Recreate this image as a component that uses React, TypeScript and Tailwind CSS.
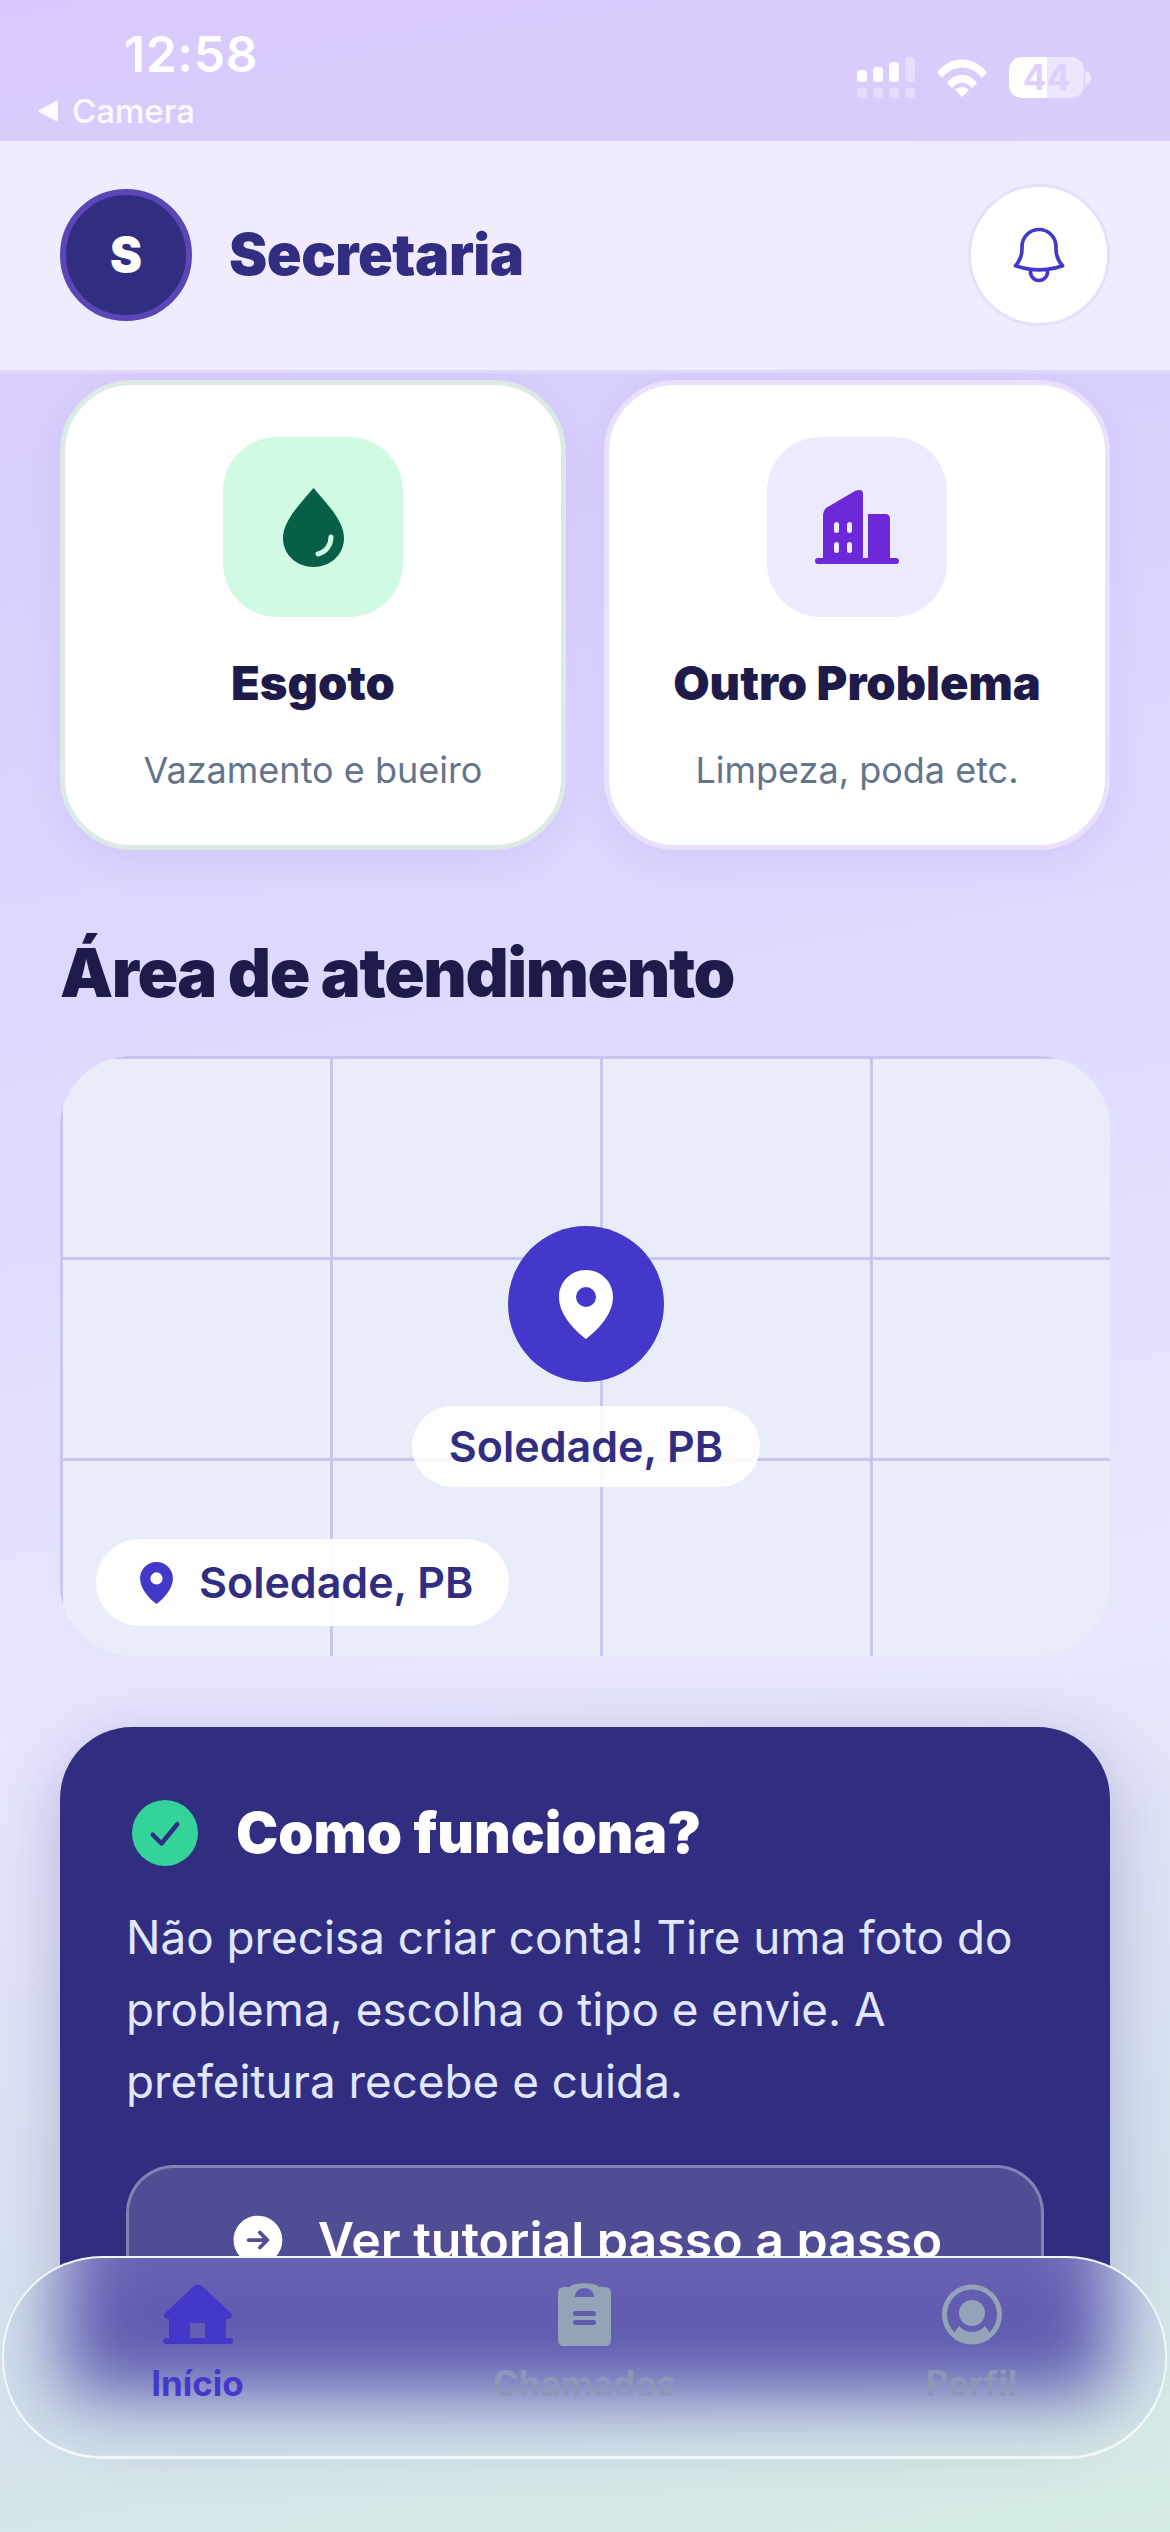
import React from "react";
import { HiOutlineBell, HiArrowRightCircle } from "react-icons/hi2";

function StatusIcons() {
  return (
    <div className="flex items-start gap-[22px] pt-[57px]">
      <svg width="58" height="41" viewBox="0 0 58 41" fill="white">
        <rect x="0" y="13" width="10" height="12" rx="3.5" />
        <rect x="16" y="10" width="10" height="15" rx="3.5" />
        <rect x="32" y="5" width="10" height="20" rx="3.5" />
        <rect x="48" y="0" width="10" height="25" rx="3.5" opacity="0.35" />
        <rect x="0" y="31" width="10" height="10" rx="3.5" opacity="0.35" />
        <rect x="16" y="31" width="10" height="10" rx="3.5" opacity="0.35" />
        <rect x="32" y="31" width="10" height="10" rx="3.5" opacity="0.35" />
        <rect x="48" y="31" width="10" height="10" rx="3.5" opacity="0.35" />
      </svg>
      <svg width="50" height="38" viewBox="0 0 50 38" fill="white" className="mt-[2px]">
        <path d="M0 13.5 C13 -4 37 -4 50 13.5 L45 19 C34 5 16 5 5 19 Z" />
        <path d="M10 24 C18 13 32 13 40 24 L35 29 C29 22 21 22 15 29 Z" />
        <path d="M18 31 C22 27 28 27 32 31 L25 38 Z" />
      </svg>
      <div className="relative flex h-[41px] w-[82px] items-center">
        <div className="flex h-[41px] w-[75px] overflow-hidden rounded-[13px]">
          <div className="w-1/2 bg-white" />
          <div className="w-1/2 bg-white/50" />
        </div>
        <div className="ml-[1px] h-[14px] w-[6px] rounded-r-full bg-white/50" />
        <div className="absolute left-0 top-0 flex h-[41px] w-[75px] items-center justify-center font-['Inter'] text-[35px] font-bold text-[#DDD0FC]">
          44
        </div>
      </div>
    </div>
  );
}

function Drop() {
  return (
    <svg width="61" height="79" viewBox="0 0 61 79">
      <path d="M30.5 0 C42 14 61 32 61 50 C61 67 47 79 30.5 79 C14 79 0 67 0 50 C0 32 19 14 30.5 0 Z" fill="#065F46" />
      <path d="M48 49 C48 57 43 64 35 66" stroke="#D1FAE5" strokeWidth="5" strokeLinecap="round" fill="none" />
    </svg>
  );
}

function Building() {
  return (
    <svg width="84" height="74" viewBox="0 0 84 74" fill="#6D28D9">
      <path d="M8 26 Q8 21 11 18 L40 1 Q48 -2 48 4 L48 68 L8 68 Z" />
      <path d="M53 24 L70 24 Q75 24 75 29 L75 68 L53 68 Z" />
      <rect x="0" y="68" width="84" height="6" rx="3" />
      <rect x="19" y="32" width="5" height="11" rx="2.5" fill="#EDE9FE" />
      <rect x="32" y="32" width="5" height="11" rx="2.5" fill="#EDE9FE" />
      <rect x="19" y="52" width="5" height="11" rx="2.5" fill="#EDE9FE" />
      <rect x="32" y="52" width="5" height="11" rx="2.5" fill="#EDE9FE" />
    </svg>
  );
}

function Pin({ width, height, fill }: { width: number; height: number; fill: string }) {
  return (
    <svg width={width} height={height} viewBox="0 0 54 69" fill={fill}>
      <path
        fillRule="evenodd"
        d="M27 0 C12 0 0 12 0 27 C0 44 15 60 27 69 C39 60 54 44 54 27 C54 12 42 0 27 0 Z M27 17 A10 10 0 1 1 27 37 A10 10 0 1 1 27 17 Z"
      />
    </svg>
  );
}

function Card({ title, sub, border, tint, icon }: { title: string; sub: string; border: string; tint: string; icon: React.ReactNode }) {
  return (
    <div className={`flex h-[470px] flex-1 flex-col items-center rounded-[72px] border-[5px] bg-white pt-[52px] shadow-[0_12px_36px_rgba(67,56,202,0.08)] ${border}`}>
      <div className={`flex h-[180px] w-[180px] items-center justify-center rounded-[54px] ${tint}`}>{icon}</div>
      <div className="mt-[39px] font-['Inter'] text-[47px] font-black leading-[54px] text-[#1E1B4B]">{title}</div>
      <div className="mt-[33px] font-['Inter'] text-[36px] leading-[54px] text-[#64748B]">{sub}</div>
    </div>
  );
}

function NavItem({ label, color, icon }: { label: string; color: string; icon: React.ReactNode }) {
  return (
    <div className="relative flex flex-col items-center">
      <div className="flex h-[72px] items-center justify-center">{icon}</div>
      <div className={`mt-[13px] font-['Inter'] text-[35px] font-bold leading-[40px] ${color}`}>{label}</div>
    </div>
  );
}

export default function App() {
  return (
    <div className="relative h-[2532px] w-[1170px] overflow-hidden bg-[linear-gradient(170deg,#DAC9FD_0%,#D9D0FD_20%,#E1DCFF_45%,#E8E6FE_65%,#D5E3EC_88%,#D6EDE5_100%)] font-['Inter',sans-serif]">
      <div className="flex h-[141px] justify-between pl-[38px] pr-[79px]">
        <div className="flex flex-col">
          <div className="ml-[86px] mt-[27px] text-[50px] font-semibold leading-[54px] tracking-[0.5px] text-white">12:58</div>
          <div className="mt-[10px] flex items-center gap-[14px]">
            <svg width="20" height="22" viewBox="0 0 20 22" fill="white" fillOpacity="0.92">
              <path d="M20 1 L20 21 Q20 22 18 21 L1 12 Q0 11 1 10 L18 1 Q20 0 20 1 Z" />
            </svg>
            <span className="text-[33px] font-medium leading-[40px] text-white/90">Camera</span>
          </div>
        </div>
        <StatusIcons />
      </div>

      <div className="flex h-[232px] items-center justify-between border-b-[3px] border-[#E2DAFD] bg-[#F0EBFE] pb-[2px] pl-[60px] pr-[60px]">
        <div className="flex items-center gap-[37px]">
          <div className="flex h-[132px] w-[132px] items-center justify-center rounded-full border-[6px] border-[#5B46B8] bg-[#312E81] text-[48px] font-black text-white">
            S
          </div>
          <div className="text-[57.5px] font-black tracking-[-0.5px] text-[#312E81]">Secretaria</div>
        </div>
        <div className="flex h-[142px] w-[142px] items-center justify-center rounded-full border-[3px] border-[#E6DFFD] bg-white">
          <HiOutlineBell className="text-[#4338CA]" size={68} strokeWidth={1.3} />
        </div>
      </div>

      <div className="flex flex-col px-[60px] pt-[7px]">
        <div className="flex gap-[38px]">
          <Card title="Esgoto" sub="Vazamento e bueiro" border="border-[#DDE9E5]" tint="bg-[#D1FAE5]" icon={<Drop />} />
          <Card title="Outro Problema" sub="Limpeza, poda etc." border="border-[#EBE0FB]" tint="bg-[#EDE9FE]" icon={<Building />} />
        </div>

        <div className="mt-[83px] text-[67px] font-black leading-[80px] tracking-[-1.4px] text-[#1E1B4B]">Área de atendimento</div>

        <div className="relative mt-[43px] h-[600px] overflow-hidden rounded-[72px] bg-[#E9EDF9] bg-[linear-gradient(#C7C6F0_3px,transparent_3px),linear-gradient(90deg,#C7C6F0_3px,transparent_3px)] bg-[size:270px_201px]">
          <div className="absolute left-[352px] top-[170px] flex w-[348px] flex-col items-center">
            <div className="flex h-[156px] w-[156px] items-center justify-center rounded-full bg-[#4338CA]">
              <Pin width={54} height={69} fill="#FFFFFF" />
            </div>
            <div className="mt-[24px] flex h-[81px] w-[348px] items-center justify-center rounded-full bg-white/90 text-[43px] font-semibold text-[#312E81]">
              Soledade, PB
            </div>
          </div>
          <div className="absolute bottom-[30px] left-[36px] flex h-[87px] w-[413px] items-center gap-[26px] rounded-full bg-white/95 pl-[44px] text-[43px] font-semibold text-[#312E81]">
            <Pin width={33} height={42} fill="#4338CA" />
            Soledade, PB
          </div>
        </div>

        <div className="mt-[71px] h-[680px] rounded-[72px] bg-[#312E81] px-[66px] pt-[71px] shadow-[0_20px_70px_rgba(49,46,129,0.28)]">
          <div className="flex items-center gap-[38px] pl-[6px]">
            <div className="flex h-[66px] w-[66px] items-center justify-center rounded-full bg-[#34D399]">
              <svg width="42" height="42" viewBox="0 0 24 24" fill="none" stroke="#312E81" strokeWidth="2.6" strokeLinecap="round" strokeLinejoin="round">
                <path d="M5 13 L10 18 L19 7" />
              </svg>
            </div>
            <div className="text-[56.5px] font-black leading-[70px] text-white">Como funciona?</div>
          </div>
          <div className="mt-[34px] text-[45.8px] leading-[72px] text-[#E0E7FF]">
            Não precisa criar conta! Tire uma foto do problema, escolha o tipo e envie. A prefeitura recebe e cuida.
          </div>
          <div className="mt-[47px] flex h-[150px] items-center justify-center gap-[30px] rounded-[48px] border-[3px] border-white/30 bg-white/15 text-[50px] font-semibold text-white">
            <HiArrowRightCircle className="text-white" size={60} />
            Ver tutorial passo a passo
          </div>
        </div>
      </div>

      <div className="absolute bottom-[73px] left-[2px] grid h-[203px] w-[1165px] grid-cols-3 overflow-hidden rounded-[100px] border-[2px] border-b-[3px] border-white/70 bg-[linear-gradient(170deg,#D2E2EC_0%,#D1E1EA_60%,#D4E9E6_100%)] pt-[20px]">
        <div className="absolute left-[58px] top-[-100px] h-[238px] w-[1050px] bg-[linear-gradient(180deg,#6F68B8_0%,#6D66B6_42%,#5C58AE_65%,#5C58AE_80%,#6360B2_100%)] blur-[36px]" />
        <NavItem
          label="Início"
          color="text-[#4338CA]"
          icon={
            <svg width="70" height="60" viewBox="0 0 70 60" fill="#4338CA">
              <path
                fillRule="evenodd"
                d="M31 2 Q35 -1 39 2 L68 29 Q71 33 66 35 L63 35 L63 54 L6 54 L6 35 L4 35 Q-1 33 2 29 Z M27 39 L27 54 L42 54 L42 39 Z"
              />
              <rect x="0" y="54" width="70" height="6" rx="3" />
            </svg>
          }
        />
        <NavItem
          label="Chamados"
          color="text-[#8E97BA]"
          icon={
            <svg width="53" height="63" viewBox="0 0 53 63" fill="#94A3B8">
              <path
                fillRule="evenodd"
                d="M6 4 L12 4 C15 -1 38 -1 41 4 L47 4 Q53 4 53 10 L53 57 Q53 63 47 63 L6 63 Q0 63 0 57 L0 10 Q0 4 6 4 Z M17 14 L36 14 C36 2 17 2 17 14 Z"
              />
              <rect x="15" y="28" width="23" height="5" rx="2.5" fill="#5F5CAF" />
              <rect x="15" y="37" width="23" height="5" rx="2.5" fill="#5F5CAF" />
            </svg>
          }
        />
        <NavItem
          label="Perfil"
          color="text-[#8E97BA]"
          icon={
            <svg width="60" height="61" viewBox="0 0 60 61" fill="#94A3B8">
              <circle cx="30" cy="30.5" r="27.5" fill="none" stroke="#94A3B8" strokeWidth="5" />
              <circle cx="30" cy="29" r="13" />
              <path d="M12 49 L17 42 Q22 48 30 48 Q38 48 43 42 L48 49 Q40 58 30 58 Q20 58 12 49 Z" />
            </svg>
          }
        />
      </div>
    </div>
  );
}
